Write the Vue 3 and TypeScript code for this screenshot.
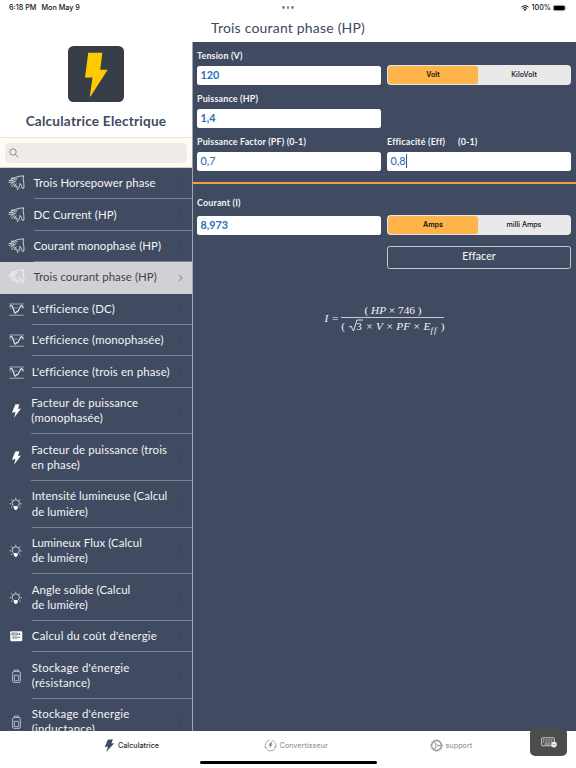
<script setup lang="ts">
import { ref } from 'vue'

type Icon = 'horse' | 'wave' | 'bolt' | 'bulb' | 'meter' | 'battery'
interface Item {
  icon: Icon
  lines: string[]
}

const items: Item[] = [
  { icon: 'horse', lines: ['Trois Horsepower phase'] },
  { icon: 'horse', lines: ['DC Current (HP)'] },
  { icon: 'horse', lines: ['Courant monophasé (HP)'] },
  { icon: 'horse', lines: ['Trois courant phase (HP)'] },
  { icon: 'wave', lines: ["L'efficience (DC)"] },
  { icon: 'wave', lines: ["L'efficience (monophasée)"] },
  { icon: 'wave', lines: ["L'efficience (trois en phase)"] },
  { icon: 'bolt', lines: ['Facteur de puissance', '(monophasée)'] },
  { icon: 'bolt', lines: ['Facteur de puissance (trois', 'en phase)'] },
  { icon: 'bulb', lines: ['Intensité lumineuse (Calcul', 'de lumière)'] },
  { icon: 'bulb', lines: ['Lumineux Flux (Calcul', 'de lumière)'] },
  { icon: 'bulb', lines: ['Angle solide (Calcul', 'de lumière)'] },
  { icon: 'meter', lines: ["Calcul du coût d'énergie"] },
  { icon: 'battery', lines: ["Stockage d'énergie", '(résistance)'] },
  { icon: 'battery', lines: ["Stockage d'énergie", '(inductance)'] },
]
const selected = ref(3)
const voltUnit = ref(0)
const ampUnit = ref(0)
</script>

<template>
  <div class="screen">
    <header class="status">
      <span class="time">6:18 PM</span>
      <span class="date">Mon May 9</span>
      <span class="dots"><i></i><i></i><i></i></span>
      <svg class="wifi" viewBox="0 0 16 12">
        <path d="M1 4.3a10 10 0 0 1 14 0M3.5 7a6.4 6.4 0 0 1 9 0" fill="none" stroke="#111" stroke-width="2" />
        <path d="M5.4 9a3.7 3.7 0 0 1 5.2 0L8 11.8z" fill="#111" />
      </svg>
      <span class="percent">100%</span>
      <svg class="power" viewBox="0 0 28 12">
        <rect x=".5" y=".5" width="24" height="11" rx="3" fill="none" stroke="#999" />
        <rect x="1.5" y="1.5" width="22" height="9" rx="2" fill="#000" />
        <path d="M26 4v4q1.5-.6 1.5-2T26 4" fill="#999" />
      </svg>
    </header>

    <div class="body">
      <aside class="sidebar">
        <div class="brand">
          <svg class="logo" viewBox="0 0 56 56">
            <rect width="56" height="56" rx="5.500" fill="#373e48" />
            <path d="M20.200 6.700h14.200l-2.200 17h7.500L22.500 50.500h-.700l2.700-19H17z" fill="#ffca00" />
          </svg>
          <h1>Calculatrice Electrique</h1>
        </div>
        <div class="search">
          <div class="search-box">
            <svg viewBox="0 0 12 12"><circle cx="4.800" cy="4.800" r="3.900" /><path d="M7.600 7.600 11.300 11.300" /></svg>
          </div>
        </div>
        <nav class="list">
          <div
            v-for="(item, i) in items"
            :key="i"
            class="row"
            :class="[item.icon, { double: item.lines.length > 1, active: i === selected }]"
            @click="selected = i"
          >
            <div class="icon">
              <svg v-if="item.icon === 'horse'" viewBox="0 0 17 16" class="line horse-svg">
                <path d="M15.800.800 11.500 1.300Q8.500 1.500 6.500 3L3 3.200M15.600 1l-.500 2.500.700 5 .200 4.500-1.600.400-1.700-4.200-1.400-.700M6.500 3.100 2.600 4.400M9.500 3.400Q7 4.200 5.500 5.200L.700 5.500M6 6.700.700 7.400M8.300 5.600 6 7 2.500 9.400M7 8.400 3.300 11.400M8.300 8.600 6.300 11.500M6.300 11.500l2.200-.500 1.300 4M12.700 8.700q-2 1.300-1.800 4.800" />
              </svg>
              <svg v-else-if="item.icon === 'wave'" viewBox="0 0 15 13" class="line">
                <path d="M.300 1h14.400M.300 12.200h14.400" stroke-width=".8" opacity=".8" />
                <path d="M.500 5H2.500M5 5h3.500M12.500 5h2.200" stroke-width=".7" opacity=".7" />
                <path d="M.800 3.700Q2.400.800 3.600 4L5.400 9q.800 2 1.800.300l.500-.800.900.300L11.500 3.500q1.200-2 2.400.300l.400 1" stroke-width="1.200" />
              </svg>
              <svg v-else-if="item.icon === 'bolt'" viewBox="0 0 9 14" class="bolt-svg">
                <path d="M3.300.600 7.400.200 6 4.900l3-.500L2 13.800l1.600-5.900L0 8.700z" fill="#fff" />
              </svg>
              <svg v-else-if="item.icon === 'bulb'" viewBox="0 0 16 16" class="line bulb-svg">
                <path d="M6 11Q3.700 9.500 3.700 7.300a4.300 4.300 0 0 1 8.600 0Q12.300 9.500 10 11zM8 .500v1.500M.800 7.800h1.700M13.500 7.800h1.700M2.500 2.500l1.400 1.400M13.500 2.500l-1.400 1.400M2.300 12.500l1.500-1.200M13.700 12.500l-1.500-1.200" />
                <path d="M6 11h4v2L8.800 14.700H7.200L6 13z" fill="#fff" stroke="#fff" stroke-width=".5" />
              </svg>
              <svg v-else-if="item.icon === 'meter'" viewBox="0 0 13 11" class="meter-svg">
                <rect x=".2" y=".3" width="12.600" height="10.400" rx="1.300" fill="#fff" />
                <path d="M2 2.200h5.500v2H2zM2 6.500h8.800M3 8h1m1.500 0h1.300M8.800 3.500h2.200M9.900 2.200v2" fill="none" stroke="#404a60" stroke-width=".8" />
              </svg>
              <svg v-else viewBox="0 0 9 14" class="line battery-svg">
                <path d="M2.500 2.300V1h4v1.300M.600 4q0-1.500 1.500-1.500h4.800q1.500 0 1.500 1.500v7.900q0 1.500-1.500 1.500H2.100q-1.500 0-1.500-1.500zM2.300 6.300h4.400v5.400H2.300z" />
              </svg>
            </div>
            <div class="label">
              <span v-for="line in item.lines" :key="line">{{ line }}</span>
            </div>
            <svg class="chevron" viewBox="0 0 5 8"><path d="m.8.8 3.200 3.200L.8 7.200" /></svg>
          </div>
        </nav>
      </aside>

      <main class="panel">
        <h2>Trois courant phase (HP)</h2>
        <div class="form">
          <section class="inputs">
            <div class="field">
              <label>Tension (V)</label>
              <div class="value">120</div>
            </div>
            <div class="segment">
              <span :class="{ on: voltUnit === 0 }" @click="voltUnit = 0">Volt</span>
              <span :class="{ on: voltUnit === 1 }" @click="voltUnit = 1">KiloVolt</span>
            </div>
            <div class="field wide">
              <label>Puissance (HP)</label>
              <div class="value">1,4</div>
            </div>
            <div class="field">
              <label>Puissance Factor (PF) (0-1)</label>
              <div class="value light">0,7</div>
            </div>
            <div class="field">
              <label>Efficacité (Eff)<span class="range">(0-1)</span></label>
              <div class="value light">0,8<i class="caret"></i></div>
            </div>
          </section>
          <div class="rule"></div>
          <section class="results">
            <div class="field">
              <label>Courant (I)</label>
              <div class="value">8,973</div>
            </div>
            <div class="segment">
              <span :class="{ on: ampUnit === 0 }" @click="ampUnit = 0">Amps</span>
              <span :class="{ on: ampUnit === 1 }" @click="ampUnit = 1">milli Amps</span>
            </div>
            <button class="clear">Effacer</button>
          </section>
          <div class="formula">
            <span class="lhs"><em>I</em> =</span>
            <span class="fraction">
              <span class="num">( <em>HP</em> × 746 )</span>
              <span class="den">
                <span>(</span>
                <svg viewBox="0 0 15 13"><path d="m1 8 2-1 2.500 5L9 1h6" /><text x="8.300" y="11.300">3</text></svg>
                <span>× <em>V</em> × <em>PF</em> × <em>E</em><sub>ff</sub> )</span>
              </span>
            </span>
          </div>
        </div>
      </main>
    </div>

    <footer class="tabs">
      <div class="tab current">
        <svg viewBox="0 0 10 13"><path d="M3.300.800 8.400.300 6.900 4.600l2.900-.400L1.700 12.900l1.900-5.400L.200 8.200z" fill="#404a60" /></svg>
        Calculatrice
      </div>
      <div class="tab convert">
        <svg viewBox="0 0 14 14">
          <path d="M2 10A5.800 5.800 0 0 1 6 1.300M8 1.300a5.800 5.800 0 0 1 4.500 7.600M11.800 10.300A5.800 5.800 0 0 1 3 11.300M1 8.200l1 1.800 1.600-1M10.800 8.800l1.700.200.700-1.700" fill="none" stroke="#999" stroke-width=".9" />
          <path d="m6.500 3.700 2.300-.200-.900 2.500h1.200L5.800 10.300l.7-3H5z" fill="#888" />
        </svg>
        Convertisseur
      </div>
      <div class="tab support">
        <svg viewBox="0 0 14 14" fill="none" stroke="#8e8e8e">
          <circle cx="7" cy="7" r="5.200" stroke-width="1.200" />
          <circle cx="7" cy="7" r="6.200" stroke-width="1" stroke-dasharray="1.200 1.235" />
          <circle cx="7" cy="7" r="1.300" stroke-width=".8" />
          <path d="M8.400 7h3.800M6.300 5.800 4.400 2.500M6.300 8.200l-1.900 3.300" />
        </svg>
        support
      </div>
      <div class="home"></div>
      <div class="keyboard">
        <svg viewBox="0 0 16 11">
          <rect x=".6" y=".8" width="12.700" height="8" rx="1" fill="none" stroke="#eee" stroke-width=".8" />
          <path d="M2 3h10M2 5h10" stroke="#ddd" stroke-width="1" stroke-dasharray="1 .6" />
          <path d="M3.500 7h6" stroke="#ddd" stroke-width=".9" />
          <circle cx="13" cy="7.600" r="2.800" fill="#eee" />
          <path d="M11.600 7.600h2.800" stroke="#777" stroke-width=".6" />
        </svg>
      </div>
    </footer>
  </div>
</template>

<style>
body { margin: 0; overflow: hidden; }
</style>

<style scoped>
* { box-sizing: border-box; }
.screen {
  width: 576px; height: 768px; position: relative; display: flex; flex-direction: column;
  background: #fff; color: #404a60; font-family: Lato, "Noto Sans", sans-serif; overflow: hidden;
}
svg { display: block; overflow: visible; }
.status {
  height: 15px; display: flex; align-items: center; padding: 0 9px 0 9px; flex: none;
  font: 500 7.200px/15px Inter, sans-serif; color: #111;
}
.time { width: 32.500px; white-space: nowrap; }
.date { white-space: nowrap; }
.dots { position: absolute; left: 282px; top: 6px; display: flex; gap: 1.800px; }
.dots i { width: 2.800px; height: 2.800px; border-radius: 50%; background: #858585; }
.wifi { width: 8px; height: 6px; margin-left: auto; }
.percent { margin: 0 2px 0 2.500px; }
.power { width: 14px; height: 6px; }
.body { display: flex; height: 716px; flex: none; }
.sidebar { width: 192px; display: flex; flex-direction: column; flex: none; overflow: hidden; }
.brand { height: 122px; padding-top: 31px; display: flex; flex-direction: column; align-items: center; flex: none; }
.logo { width: 56px; height: 56px; margin-top: .2px; }
h1 { margin: 9.500px 0 0; font-size: 13.600px; line-height: 18px; font-weight: 700; letter-spacing: .23px; white-space: nowrap; }
.search { height: 31px; padding: 5px 5px; flex: none; background: #fefaf4; border-top: 1px solid #efe0cf; border-bottom: 1px solid #e0cdb8; }
.search-box { height: 20px; border-radius: 5px; background: #efebe9; padding: 4.500px 4px; }
.search-box svg { width: 10px; height: 10px; fill: none; stroke: #85817e; stroke-width: 1.100; }
.list { flex: 1; overflow: hidden; background: #404a60; color: #f4f5f7; min-height: 0; }
.row { height: 31.400px; display: flex; align-items: center; position: relative; padding-left: 8px; }
.row.double { height: 46.650px; }
.icon { width: 16px; flex: none; display: flex; justify-content: center; align-items: center; }
.icon svg { width: 15px; height: 13px; }
.icon .horse-svg { width: 17px; height: 16px; margin-top: -1px; }
.icon .bolt-svg { width: 9px; height: 14px; }
.icon .bulb-svg { width: 13.500px; height: 14px; }
.icon .meter-svg { width: 12.500px; height: 10.500px; }
.icon .battery-svg { width: 9px; height: 14px; }
.line { fill: none; stroke: #e4e7eb; stroke-width: 1; stroke-linejoin: round; }
.horse-svg { stroke-width: .85; }
.battery-svg { stroke: #bfc5cd; stroke-width: .9; }
.label {
  margin-left: 7.800px; flex: 1; align-self: stretch; display: flex; flex-direction: column; justify-content: center; padding-bottom: .6px;
  border-bottom: 1px solid #78818f; font-size: 11.400px; line-height: 15.200px; letter-spacing: .15px; white-space: nowrap;
}
.horse .label { margin-left: 9.500px; letter-spacing: .08px; }
.bulb .label { letter-spacing: .08px; }
.meter .label, .battery .label { letter-spacing: .23px; }
.bolt .label { margin-left: 7.300px; }
.chevron { position: absolute; right: 9px; top: calc(50% - 4px); width: 5px; height: 8px; fill: none; stroke: #3a4458; stroke-width: 1.100; }
.row.active { background: #d1d0d5; color: #42434c; }
.active .label { border-color: #d1d0d5; }
.active .line { stroke: #f5f5f5; }
.active .chevron { stroke: #97979e; }
.panel { flex: 1; min-width: 0; display: flex; flex-direction: column; }
h2 { margin: 0 0 0 -192px; height: 27px; flex: none; text-align: center; font-size: 14px; line-height: 26px; font-weight: 400; letter-spacing: .2px; }
.form { flex: 1; background: #404a60; border-left: 1px solid #a0a6b1; color: #f4f5f7; }
.inputs, .results { display: grid; grid-template-columns: 184px 184px; column-gap: 6px; padding: 0 4px; align-items: end; align-content: start; }
.inputs { height: 140px; padding-top: 8px; row-gap: 8px; }
.rule { height: 1.500px; background: #eda43f; }
.field { height: 35px; display: flex; flex-direction: column; justify-content: space-between; }
.wide { grid-column: 1 / 3; width: 184px; }
label { font-size: 8.950px; line-height: 12px; font-weight: 700; letter-spacing: .16px; white-space: nowrap; }
.range { margin-left: 12.800px; }
.value {
  height: 19.500px; background: #fff; border-radius: 2.500px; padding: 0 0 1px 3.500px; color: #2c70b7;
  font-size: 10.800px; line-height: 18px; font-weight: 700; display: flex; align-items: center;
}
.value.light { font-weight: 500; }
.caret { width: 1px; height: 14px; background: #315f9e; }
.segment {
  height: 20px; background: #e9e9e9; border-radius: 4px; padding: 1px; display: grid; grid-template-columns: 90px 1fr;
  color: #111; font: 500 7.100px/18px Inter, sans-serif; text-align: center;
}
.segment .on { background: #ffb44b; border-radius: 3.500px; font-weight: 600; box-shadow: 0 0 1px #9996; }
.results { padding-top: 13.500px; row-gap: 10.500px; }
.results .field { height: 38px; }
.clear {
  grid-column: 2; height: 23px; border: 1px solid #c4c9d0; border-radius: 2.500px; background: transparent; color: #f4f5f7;
  padding: 0 0 2px; font: 500 10.500px/18px Lato, sans-serif; letter-spacing: .1px;
}
.formula {
  display: flex; justify-content: center; align-items: center; margin-top: 34px; gap: 3px;
  font-family: "Liberation Serif", serif; font-size: 11.300px; color: #f4f5f7; white-space: nowrap;
}
.lhs { word-spacing: 1px; }
.fraction { display: flex; flex-direction: column; width: 103px; }
.num { height: 15px; line-height: 15px; text-align: center; border-bottom: 1px solid #c5c9d0; }
.den { height: 16px; display: flex; align-items: center; justify-content: center; gap: 3px; word-spacing: .3px; letter-spacing: .15px; }
.den svg { width: 15px; height: 13px; }
.den path { fill: none; stroke: #f4f5f7; stroke-width: .9; }
.den text { font-size: 11px; fill: #f4f5f7; }
sub { font-size: 9px; font-style: italic; line-height: 0; vertical-align: -3px; letter-spacing: 1px; }
.tabs { flex: 1; background: #fff; display: grid; grid-template-columns: 192px 192px 192px; position: relative; font: 500 7.200px/12px Inter, sans-serif; color: #999; }
.tab { display: flex; align-items: center; gap: 3px; height: 29px; padding-left: 104px; white-space: nowrap; }
.tab svg { width: 13px; height: 13px; }
.current { color: #292b30; padding-left: 103px; gap: 2px; }
.convert { padding-left: 71.500px; }
.support { padding-left: 45.500px; }
.home { position: absolute; left: 199.500px; top: 29.500px; width: 177px; height: 3px; border-radius: 2px; background: #000; }
.keyboard { position: absolute; left: 530px; top: -3px; width: 37px; height: 28px; border-radius: 5px; background: #4c4c4b; display: flex; align-items: center; justify-content: center; }
.keyboard svg { width: 16px; height: 11px; }
</style>
